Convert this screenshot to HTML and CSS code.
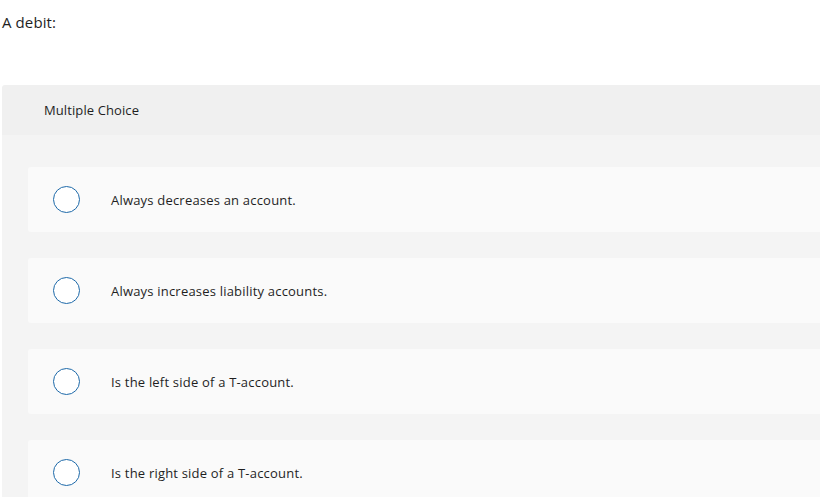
FILE: index.html
```html
<!DOCTYPE html>
<html>
<head>
<meta charset="utf-8">
<link rel="stylesheet" href="styles.css">
</head>
<body>
<div class="question">A debit:</div>
<div class="panel">
  <div class="panel-head">Multiple Choice</div>
  <div class="panel-body">
    <div class="option"><span class="radio"></span><span class="label">Always decreases an account.</span></div>
    <div class="option"><span class="radio"></span><span class="label">Always increases liability accounts.</span></div>
    <div class="option"><span class="radio"></span><span class="label">Is the left side of a T-account.</span></div>
    <div class="option"><span class="radio"></span><span class="label">Is the right side of a T-account.</span></div>
  </div>
</div>
</body>
</html>
```
FILE: styles.css
```css
html, body {
  margin: 0;
  padding: 0;
  background: #fff;
  overflow: hidden;
}
body {
  font-family: "Open Sans", "Lato", sans-serif;
  color: #1f1f1f;
  width: 820px;
  height: 497px;
}
.question {
  padding: 12px 0 0 2px;
  font-size: 15px;
  letter-spacing: 0.1px;
  line-height: 20px;
  height: 85px;
  box-sizing: border-box;
}
.panel {
  margin-left: 2px;
  margin-right: -20px;
  border-radius: 3px 3px 0 0;
  overflow: hidden;
}
.panel-head {
  background: #f0f0f0;
  height: 50px;
  display: flex;
  align-items: center;
  padding-left: 42px;
  font-size: 13px;
  letter-spacing: 0.1px;
}
.panel-body {
  background: #f4f4f4;
  padding: 32px 0 0 26px;
  display: flex;
  flex-direction: column;
  gap: 26px;
}
.option {
  background: #fafafa;
  border-radius: 3px;
  height: 65px;
  display: flex;
  align-items: center;
  padding-left: 25px;
}
.radio {
  width: 25px;
  height: 25px;
  border: 1.5px solid #1d69a9;
  border-radius: 50%;
  background: #fff;
  flex: none;
}
.label {
  margin-left: 31px;
  font-size: 13px;
  letter-spacing: 0.2px;
}
```
